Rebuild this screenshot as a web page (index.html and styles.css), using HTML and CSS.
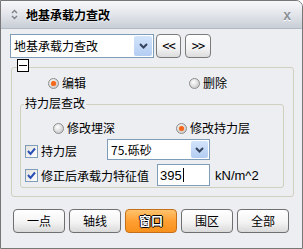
FILE: index.html
```html
<!DOCTYPE html>
<html lang="zh">
<head>
	<meta charset="UTF-8">
	<link rel="stylesheet" href="styles.css">
</head>
<body>
<div class="win">
	<div class="titlebar">
		<svg class="ticon" width="7" height="11" viewBox="0 0 7 11"><polyline points="1,4 3.5,1.5 6,4" fill="none" stroke="#7d8289" stroke-width="1.4"/><polyline points="1,7 3.5,9.5 6,7" fill="none" stroke="#7d8289" stroke-width="1.4"/></svg>
		<span class="ttl">地基承载力查改</span>
		<span class="close">x</span>
	</div>
	<div class="body">
		<div class="toprow">
			<div class="combo main-combo">
				<span>地基承载力查改</span>
				<span class="drop"><svg width="9" height="6" viewBox="0 0 9 6"><polyline points="1,1 4.5,4.5 8,1" fill="none" stroke="#34435e" stroke-width="2"/></svg></span>
			</div>
			<button class="nav">&lt;&lt;</button>
			<button class="nav nav2">&gt;&gt;</button>
		</div>

		<fieldset class="outer">
			<legend><span class="collapse"></span></legend>
			<div class="mode-row">
				<label class="opt first"><span class="radio on"></span>编辑</label>
				<label class="opt"><span class="radio"></span>删除</label>
			</div>

			<fieldset class="inner">
				<legend>持力层查改</legend>
				<div class="layer-row">
					<label class="opt first"><span class="radio"></span>修改埋深</label>
					<label class="opt"><span class="radio on"></span>修改持力层</label>
				</div>
				<div class="row row1">
					<label class="chk c1"><span class="box"><svg width="11" height="11" viewBox="0 0 11 11"><polyline points="2,5 4.5,8 9,2.5" fill="none" stroke="#2c4fb8" stroke-width="2"/></svg></span>持力层</label>
					<div class="combo soil">
						<span>75.砾砂</span>
						<span class="drop"><svg width="9" height="6" viewBox="0 0 9 6"><polyline points="1,1 4.5,4.5 8,1" fill="none" stroke="#34435e" stroke-width="2"/></svg></span>
					</div>
				</div>
				<div class="row row2">
					<label class="chk"><span class="box"><svg width="11" height="11" viewBox="0 0 11 11"><polyline points="2,5 4.5,8 9,2.5" fill="none" stroke="#2c4fb8" stroke-width="2"/></svg></span>修正后承载力特征值</label>
					<div class="field">395<span class="caret"></span></div>
					<span class="unit">kN/m^2</span>
				</div>
			</fieldset>
		</fieldset>

		<div class="btns">
			<button class="btn">一点</button>
			<button class="btn">轴线</button>
			<button class="btn hot">窗口</button>
			<button class="btn">围区</button>
			<button class="btn">全部</button>
		</div>
	</div>
</div>
</body>
</html>
```

FILE: styles.css
```css
*{
	margin:0; padding:0; box-sizing:border-box;
}
body{
	width:303px; height:249px;
	font:12px/14px "Noto Sans CJK SC","Liberation Sans",sans-serif;
	color:#000; background:#fff;
}
.win{
	width:303px; height:249px;
	border:1px solid #777;
	border-radius:0 7px 0 0;
	background:#eceef2;
	overflow:hidden;
	display:flex; flex-direction:column;
}
.titlebar{
	height:28px; flex:none;
	display:flex; align-items:center;
	padding:0 11px 0 10px;
	background:linear-gradient(#f7f8fa,#e2e5ea 50%,#c8ced6);
	border-bottom:1px solid #b3bac4;
}
.ticon{ margin-right:8px; }
.ttl{
	font-weight:bold; font-size:12px;
	text-shadow:0 0 2px #fff,0 0 2px #fff;
}
.close{
	margin-left:auto;
	font:bold 14px/14px "Liberation Sans",sans-serif;
	color:#8b9097;
	text-shadow:0 1px 0 #fff;
}

.body{
	padding:5px 9px 0 9px;
}
.toprow{
	display:flex; align-items:flex-start;
	height:24px;
}
.combo{
	display:flex; align-items:center;
	border:1px solid #7f9db9; background:#fff;
	padding-left:3px;
}
.main-combo{ width:144px; height:24px; }
.drop{
	margin-left:auto; margin-right:1px;
	width:18px; height:20px;
	border-radius:2px;
	background:linear-gradient(#d3e4fb,#b3cdf2);
	display:flex; align-items:center; justify-content:center;
}
.nav{
	width:25px; height:24px;
	margin-left:2px;
	border:1px solid #7b7b7b; border-radius:4px;
	background:linear-gradient(#fff,#f3f3f3 60%,#dcdcdc);
	font:12px/14px "DejaVu Sans Mono","Liberation Mono",monospace;
	letter-spacing:-1px;
}
.nav2{ width:26px; margin-left:4px; }

fieldset{
	border:1px solid #d0d0bf;
	border-radius:3px;
}
.outer{
	margin:1px 0 0 1px;
	width:283px;
	padding:0 8px 8px 5px;
}
.outer legend{
	height:17px; padding:0;
}
.collapse{
	display:block; position:relative;
	width:12px; height:13px;
	border:1px solid #000; background:#fff;
}
.collapse::after{
	content:''; position:absolute;
	left:1px; right:1px; top:5px;
	height:1px; background:#000;
}
.mode-row{
	display:flex; align-items:center;
	height:14px; padding-left:31px;
}
.opt{
	display:flex; align-items:center;
}
.mode-row .first{ width:141px; }
.radio{
	width:11px; height:11px; margin-right:3px;
	border-radius:50%;
	border:1px solid #8d8d8d;
	background:radial-gradient(circle at 40% 35%,#fff,#d0d0d0 70%,#b8b8b8);
	display:flex; align-items:center; justify-content:center;
}
.radio.on::after{
	content:''; width:5px; height:5px; border-radius:50%;
	background:#f2671c;
	box-shadow:0 0 1px #ff9a5a;
}

.inner{
	margin:6px 0 0 3px;
	width:264px;
	padding:0 3px 1px 3px;
}
.inner legend{
	padding:0 1px; line-height:14px;
}
.layer-row{
	display:flex; align-items:center;
	height:14px; margin-top:8px; padding-left:29px;
}
.layer-row .first{ width:123px; }
.row{
	display:flex; align-items:center;
}
.row1{ margin-top:4px; height:21px; }
.row2{ margin-top:4px; height:22px; }
.chk{
	display:flex; align-items:center;
	margin-left:1px; padding-top:3px;
}
.row2 .chk{ padding-top:1px; }
.c1{ width:82px; }
.box{
	width:13px; height:13px; margin-right:3px;
	border:1px solid #7f9db9;
	background:linear-gradient(135deg,#e2e2dc,#fff);
	display:flex; align-items:center; justify-content:center;
}
.soil{ width:103px; height:21px; }
.soil .drop{ width:17px; height:17px; }
.field{
	width:53px; height:22px; margin-left:8px;
	border:1px solid #7f9db9; background:#fff;
	padding-left:2px;
	display:flex; align-items:center;
	font:13px "Liberation Sans",sans-serif;
}
.caret{
	width:1px; height:14px; background:#000; margin-left:1px;
}
.unit{
	margin-left:5px;
	font:13px "Liberation Sans",sans-serif;
}

.btns{
	display:flex; gap:4px;
	margin:12px 0 0 3px;
}
.btn{
	width:52px; height:24px;
	border:1px solid #6f6f6f; border-radius:4px;
	background:linear-gradient(#fff,#f4f4f4 55%,#d9d9d9);
	font:12px/14px "Noto Sans CJK SC",sans-serif;
	color:#000;
}
.hot{
	border-color:#c4701a;
	background:linear-gradient(#ffc36e,#ffa033 50%,#f8901c);
	color:#fff; font-weight:bold;
	text-shadow:1px 0 0 #000,-1px 0 0 #000,0 1px 0 #000,0 -1px 0 #000;
}
```
